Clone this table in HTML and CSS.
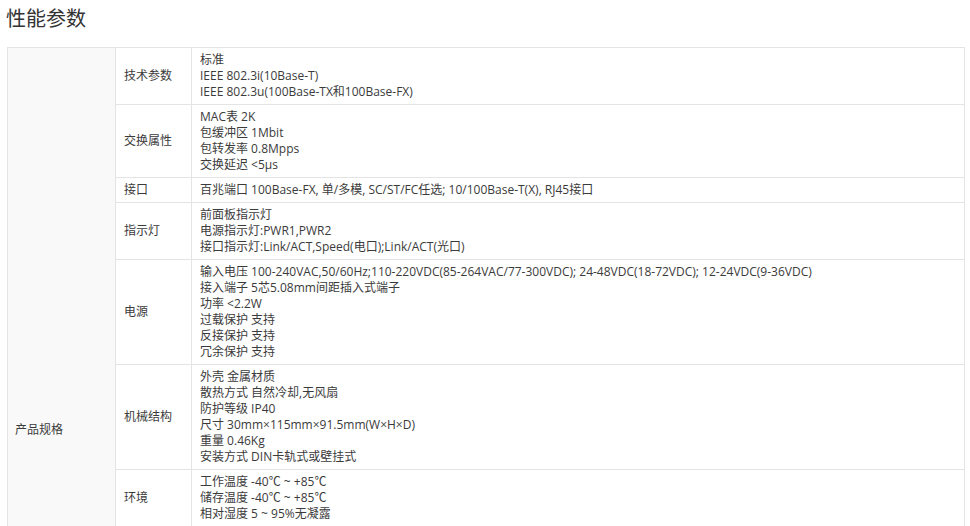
FILE: index.html
```html
<!DOCTYPE html>
<html>
<head>
    <meta charset="utf-8">
    <title>性能参数</title>
    <link rel="stylesheet" href="styles.css">
</head>
<body>
    <div class="container">
        <h2 class="title">性能参数</h2>
        <table class="spec">
            <colgroup>
                <col class="col-group">
                <col class="col-name">
                <col>
            </colgroup>
            <tr>
                <td class="group" rowspan="8">产品规格</td>
                <td class="name">技术参数</td>
                <td class="value">标准<br>IEEE 802.3i(10Base-T)<br>IEEE 802.3u(100Base-TX和100Base-FX)</td>
            </tr>
            <tr>
                <td class="name">交换属性</td>
                <td class="value">MAC表 2K<br>包缓冲区 1Mbit<br>包转发率 0.8Mpps<br>交换延迟 &lt;5μs</td>
            </tr>
            <tr>
                <td class="name">接口</td>
                <td class="value">百兆端口 100Base-FX, 单/多模, SC/ST/FC任选; 10/100Base-T(X), RJ45接口</td>
            </tr>
            <tr>
                <td class="name">指示灯</td>
                <td class="value">前面板指示灯<br>电源指示灯:PWR1,PWR2<br>接口指示灯:Link/ACT,Speed(电口);Link/ACT(光口)</td>
            </tr>
            <tr>
                <td class="name">电源</td>
                <td class="value">输入电压 100-240VAC,50/60Hz;110-220VDC(85-264VAC/77-300VDC); 24-48VDC(18-72VDC); 12-24VDC(9-36VDC)<br>接入端子 5芯5.08mm间距插入式端子<br>功率 &lt;2.2W<br>过载保护 支持<br>反接保护 支持<br>冗余保护 支持</td>
            </tr>
            <tr>
                <td class="name">机械结构</td>
                <td class="value">外壳 金属材质<br>散热方式 自然冷却,无风扇<br>防护等级 IP40<br>尺寸 30mm×115mm×91.5mm(W×H×D)<br>重量 0.46Kg<br>安装方式 DIN卡轨式或壁挂式</td>
            </tr>
            <tr>
                <td class="name">环境</td>
                <td class="value">工作温度 -40℃ ~ +85℃<br>储存温度 -40℃ ~ +85℃<br>相对湿度 5 ~ 95%无凝露</td>
            </tr>
            <!-- rows below the fold -->
            <tr class="more">
                <td class="name"></td>
                <td class="value"></td>
            </tr>
        </table>
    </div>
</body>
</html>
```

FILE: styles.css
```css
body {
    margin: 0;
    font-family: "Open Sans", "Noto Sans CJK SC", sans-serif;
    color: #333;
    background: #fff;
}
.container {
    padding: 0 5px 0 7px;
}
.title {
    margin: 0;
    padding: 4px 0 13px;
    font-size: 20px;
    font-weight: normal;
    line-height: 30px;
    margin-left: -1px;
}
.spec {
    width: 958px;
    border-collapse: collapse;
    font-size: 12px;
    line-height: 16px;
    color: #3b3b3b;
}
.col-group {
    width: 108px;
}
.col-name {
    width: 76px;
}
.spec td {
    border: 1px solid #e4e4e4;
    padding: 4px 8px;
    vertical-align: middle;
    text-align: left;
}
.spec .group {
    background-color: #f9f9f9;
    padding-left: 7px;
}
.spec .value {
    vertical-align: top;
}
.spec .more td {
    height: 276px;
}
```
